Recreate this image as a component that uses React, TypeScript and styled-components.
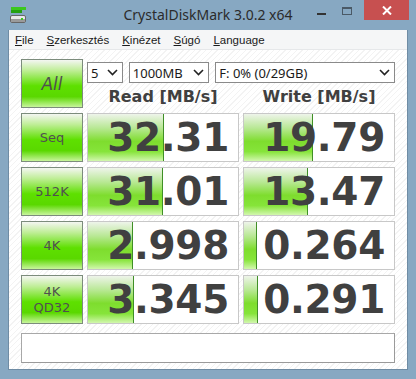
import React from 'react'
import styled, { createGlobalStyle } from 'styled-components'

const GlobalStyle = createGlobalStyle`
  html, body {
    margin: 0;
    padding: 0;
    background: #87a8c2;
  }
`

const data = {
  menu: ['File', 'Szerkesztés', 'Kinézet', 'Súgó', 'Language'],
  rows: [
    { label: ['Seq'], read: '32.31', readBar: 75, write: '19.79', writeBar: 68 },
    { label: ['512K'], read: '31.01', readBar: 74, write: '13.47', writeBar: 63 },
    { label: ['4K'], read: '2.998', readBar: 44, write: '0.264', writeBar: 12 },
    { label: ['4K', 'QD32'], read: '3.345', readBar: 45, write: '0.291', writeBar: 13 },
  ],
}

const Chevron = () => (
  <svg width="11" height="7" viewBox="0 0 11 7">
    <path d="M1 1 L5.5 5.5 L10 1" fill="none" stroke="#222" strokeWidth="1.6" />
  </svg>
)

const AppIcon = () => (
  <svg width="17" height="17" viewBox="0 0 17 17">
    <rect x="1" y="0" width="15" height="3" fill="#3cc81e" />
    <rect x="1" y="3" width="11" height="3" fill="#24a010" />
    <rect x="0.5" y="8.5" width="15" height="7" rx="1.5" fill="#e8e8e8" stroke="#666" />
    <rect x="1" y="12" width="14" height="3" fill="#9a9a9a" />
    <rect x="11" y="11" width="2" height="2" fill="#3cc81e" />
  </svg>
)

const Select = ({ width, value }: { width: number; value: string }) => (
  <SelectBox $width={width}>
    <span>{value}</span>
    <Chevron />
  </SelectBox>
)

const App: React.FC = () => {
  return (
    <Window>
      <GlobalStyle />
      <TitleBar>
        <IconSlot>
          <AppIcon />
        </IconSlot>
        <Title>CrystalDiskMark 3.0.2 x64</Title>
        <Controls>
          <CtrlButton>
            <MinGlyph />
          </CtrlButton>
          <CtrlButton>
            <MaxGlyph />
          </CtrlButton>
          <CloseButton>
            <svg width="10" height="9" viewBox="0 0 10 9">
              <path d="M1 0.5 L9 8.5 M9 0.5 L1 8.5" stroke="#fff" strokeWidth="2" />
            </svg>
          </CloseButton>
        </Controls>
      </TitleBar>
      <Client>
        <MenuBar>
          {data.menu.map((item) => (
            <MenuItem key={item}>
              <u>{item[0]}</u>
              {item.slice(1)}
            </MenuItem>
          ))}
        </MenuBar>
        <Content>
          <Grid>
            <TestButton $big>All</TestButton>
            <Controls2>
              <SelectRow>
                <Select width={36} value="5" />
                <Select width={81} value="1000MB" />
                <Select width={181} value="F: 0% (0/29GB)" />
              </SelectRow>
              <HeaderRow>
                <Header>Read [MB/s]</Header>
                <Header>Write [MB/s]</Header>
              </HeaderRow>
            </Controls2>
            {data.rows.map((row) => (
              <React.Fragment key={row.label.join(' ')}>
                <TestButton>
                  {row.label.map((l) => (
                    <span key={l}>{l}</span>
                  ))}
                </TestButton>
                <ValueCell>
                  <Fill style={{ width: `${row.readBar}px` }} />
                  <Value>{row.read}</Value>
                </ValueCell>
                <ValueCell>
                  <Fill style={{ width: `${row.writeBar}px` }} />
                  <Value>{row.write}</Value>
                </ValueCell>
              </React.Fragment>
            ))}
          </Grid>
          <Comment />
        </Content>
      </Client>
    </Window>
  )
}

const Window = styled.div`
  width: 416px;
  height: 379px;
  background: #87a8c2;
  display: flex;
  flex-direction: column;
  overflow: hidden;
  font-family: 'Noto Sans', 'Open Sans', sans-serif;
`

const TitleBar = styled.div`
  height: 30px;
  display: flex;
  align-items: flex-start;
`

const IconSlot = styled.div`
  padding: 7px 0 0 10px;
  width: 26px;
`

const Title = styled.div`
  flex: 1;
  text-align: center;
  font-size: 14px;
  line-height: 30px;
  color: #2b2b2b;
  padding-left: 72px;
`

const Controls = styled.div`
  display: flex;
  align-items: flex-start;
  margin-right: 7px;
`

const CtrlButton = styled.div`
  width: 26px;
  height: 20px;
  display: flex;
  align-items: center;
  justify-content: center;
`

const MinGlyph = styled.div`
  width: 9px;
  height: 2px;
  background: #333;
  margin-top: 7px;
`

const MaxGlyph = styled.div`
  width: 8px;
  height: 5px;
  border: 1px solid #4a5966;
  border-top-width: 2px;
  margin-top: 1px;
`

const CloseButton = styled.div`
  width: 45px;
  height: 20px;
  margin-left: 4px;
  background: #c75050;
  display: flex;
  align-items: center;
  justify-content: center;
`

const Client = styled.div`
  flex: 1;
  margin: 0 8px 9px 8px;
  display: flex;
  flex-direction: column;
  border: 1px solid #6f8ca4;
  border-top: none;
`

const MenuBar = styled.div`
  height: 19px;
  background: #f5f6f7;
  display: flex;
  align-items: center;
  padding-left: 6px;
  gap: 13px;
  border-bottom: 1px solid #e6e8ea;
`

const MenuItem = styled.span`
  font-size: 11.5px;
  color: #1a1a1a;
  font-family: 'Liberation Sans', Arial, sans-serif;
  u {
    text-decoration: underline;
  }
`

const Content = styled.div`
  flex: 1;
  background: repeating-linear-gradient(135deg, #ffffff 0 3px, #f3f3f3 3px 4px);
  padding: 9px 12px 0 12px;
  display: flex;
  flex-direction: column;
  gap: 9px;
`

const Grid = styled.div`
  display: grid;
  grid-template-columns: 62px 152px 152px;
  grid-auto-rows: 49px;
  column-gap: 4px;
  row-gap: 5px;
`

const TestButton = styled.div<{ $big?: boolean }>`
  box-sizing: border-box;
  border: 1px solid #7c8c7c;
  background: linear-gradient(
    180deg,
    #f4f6f2 0%,
    #c0ee98 22%,
    #5ee000 55%,
    #5ad800 78%,
    #c8f59c 100%
  );
  display: flex;
  flex-direction: column;
  align-items: center;
  justify-content: center;
  font-family: 'DejaVu Sans', sans-serif;
  font-size: ${(p) => (p.$big ? '17px' : '13px')};
  font-style: ${(p) => (p.$big ? 'italic' : 'normal')};
  color: #505050;
  line-height: 16px;
`

const Controls2 = styled.div`
  grid-column: 2 / 4;
  display: flex;
  flex-direction: column;
`

const SelectRow = styled.div`
  display: flex;
  gap: 6px;
  margin-top: 3px;
`

const SelectBox = styled.div<{ $width: number }>`
  box-sizing: border-box;
  width: ${(p) => p.$width}px;
  height: 21px;
  border: 1px solid #8a8a8a;
  background: #fff;
  display: flex;
  align-items: center;
  justify-content: space-between;
  padding: 0 4px 0 3px;
  font-size: 13px;
  color: #1a1a1a;
  font-family: 'Noto Sans', sans-serif;
`

const HeaderRow = styled.div`
  display: grid;
  grid-template-columns: 152px 152px;
  column-gap: 4px;
  margin-top: 4px;
`

const Header = styled.div`
  text-align: center;
  font-family: 'DejaVu Sans', sans-serif;
  font-weight: bold;
  font-size: 16px;
  color: #404040;
  line-height: 20px;
`

const ValueCell = styled.div`
  position: relative;
  box-sizing: border-box;
  border: 1px solid #c8c8c8;
  background: #fff;
  display: flex;
  align-items: center;
  justify-content: flex-end;
  overflow: hidden;
`

const Fill = styled.div`
  position: absolute;
  left: 0;
  top: 0;
  bottom: 0;
  border-right: 1px solid #3f8f26;
  background: linear-gradient(
    180deg,
    #eef4ea 0%,
    #b8e894 30%,
    #7edd2e 58%,
    #86e43a 80%,
    #d2f7ae 100%
  );
`

const Value = styled.span`
  position: relative;
  font-family: 'DejaVu Sans', sans-serif;
  font-weight: bold;
  font-size: 39px;
  color: #404040;
  padding-right: 9px;
  line-height: 1;
  letter-spacing: -0.3px;
`

const Comment = styled.div`
  height: 30px;
  box-sizing: border-box;
  border: 1px solid #a8a8a8;
  border-right-color: #9a9a9a;
  border-bottom-color: #9a9a9a;
  background: #fff;
  width: 374px;
`

export default App
